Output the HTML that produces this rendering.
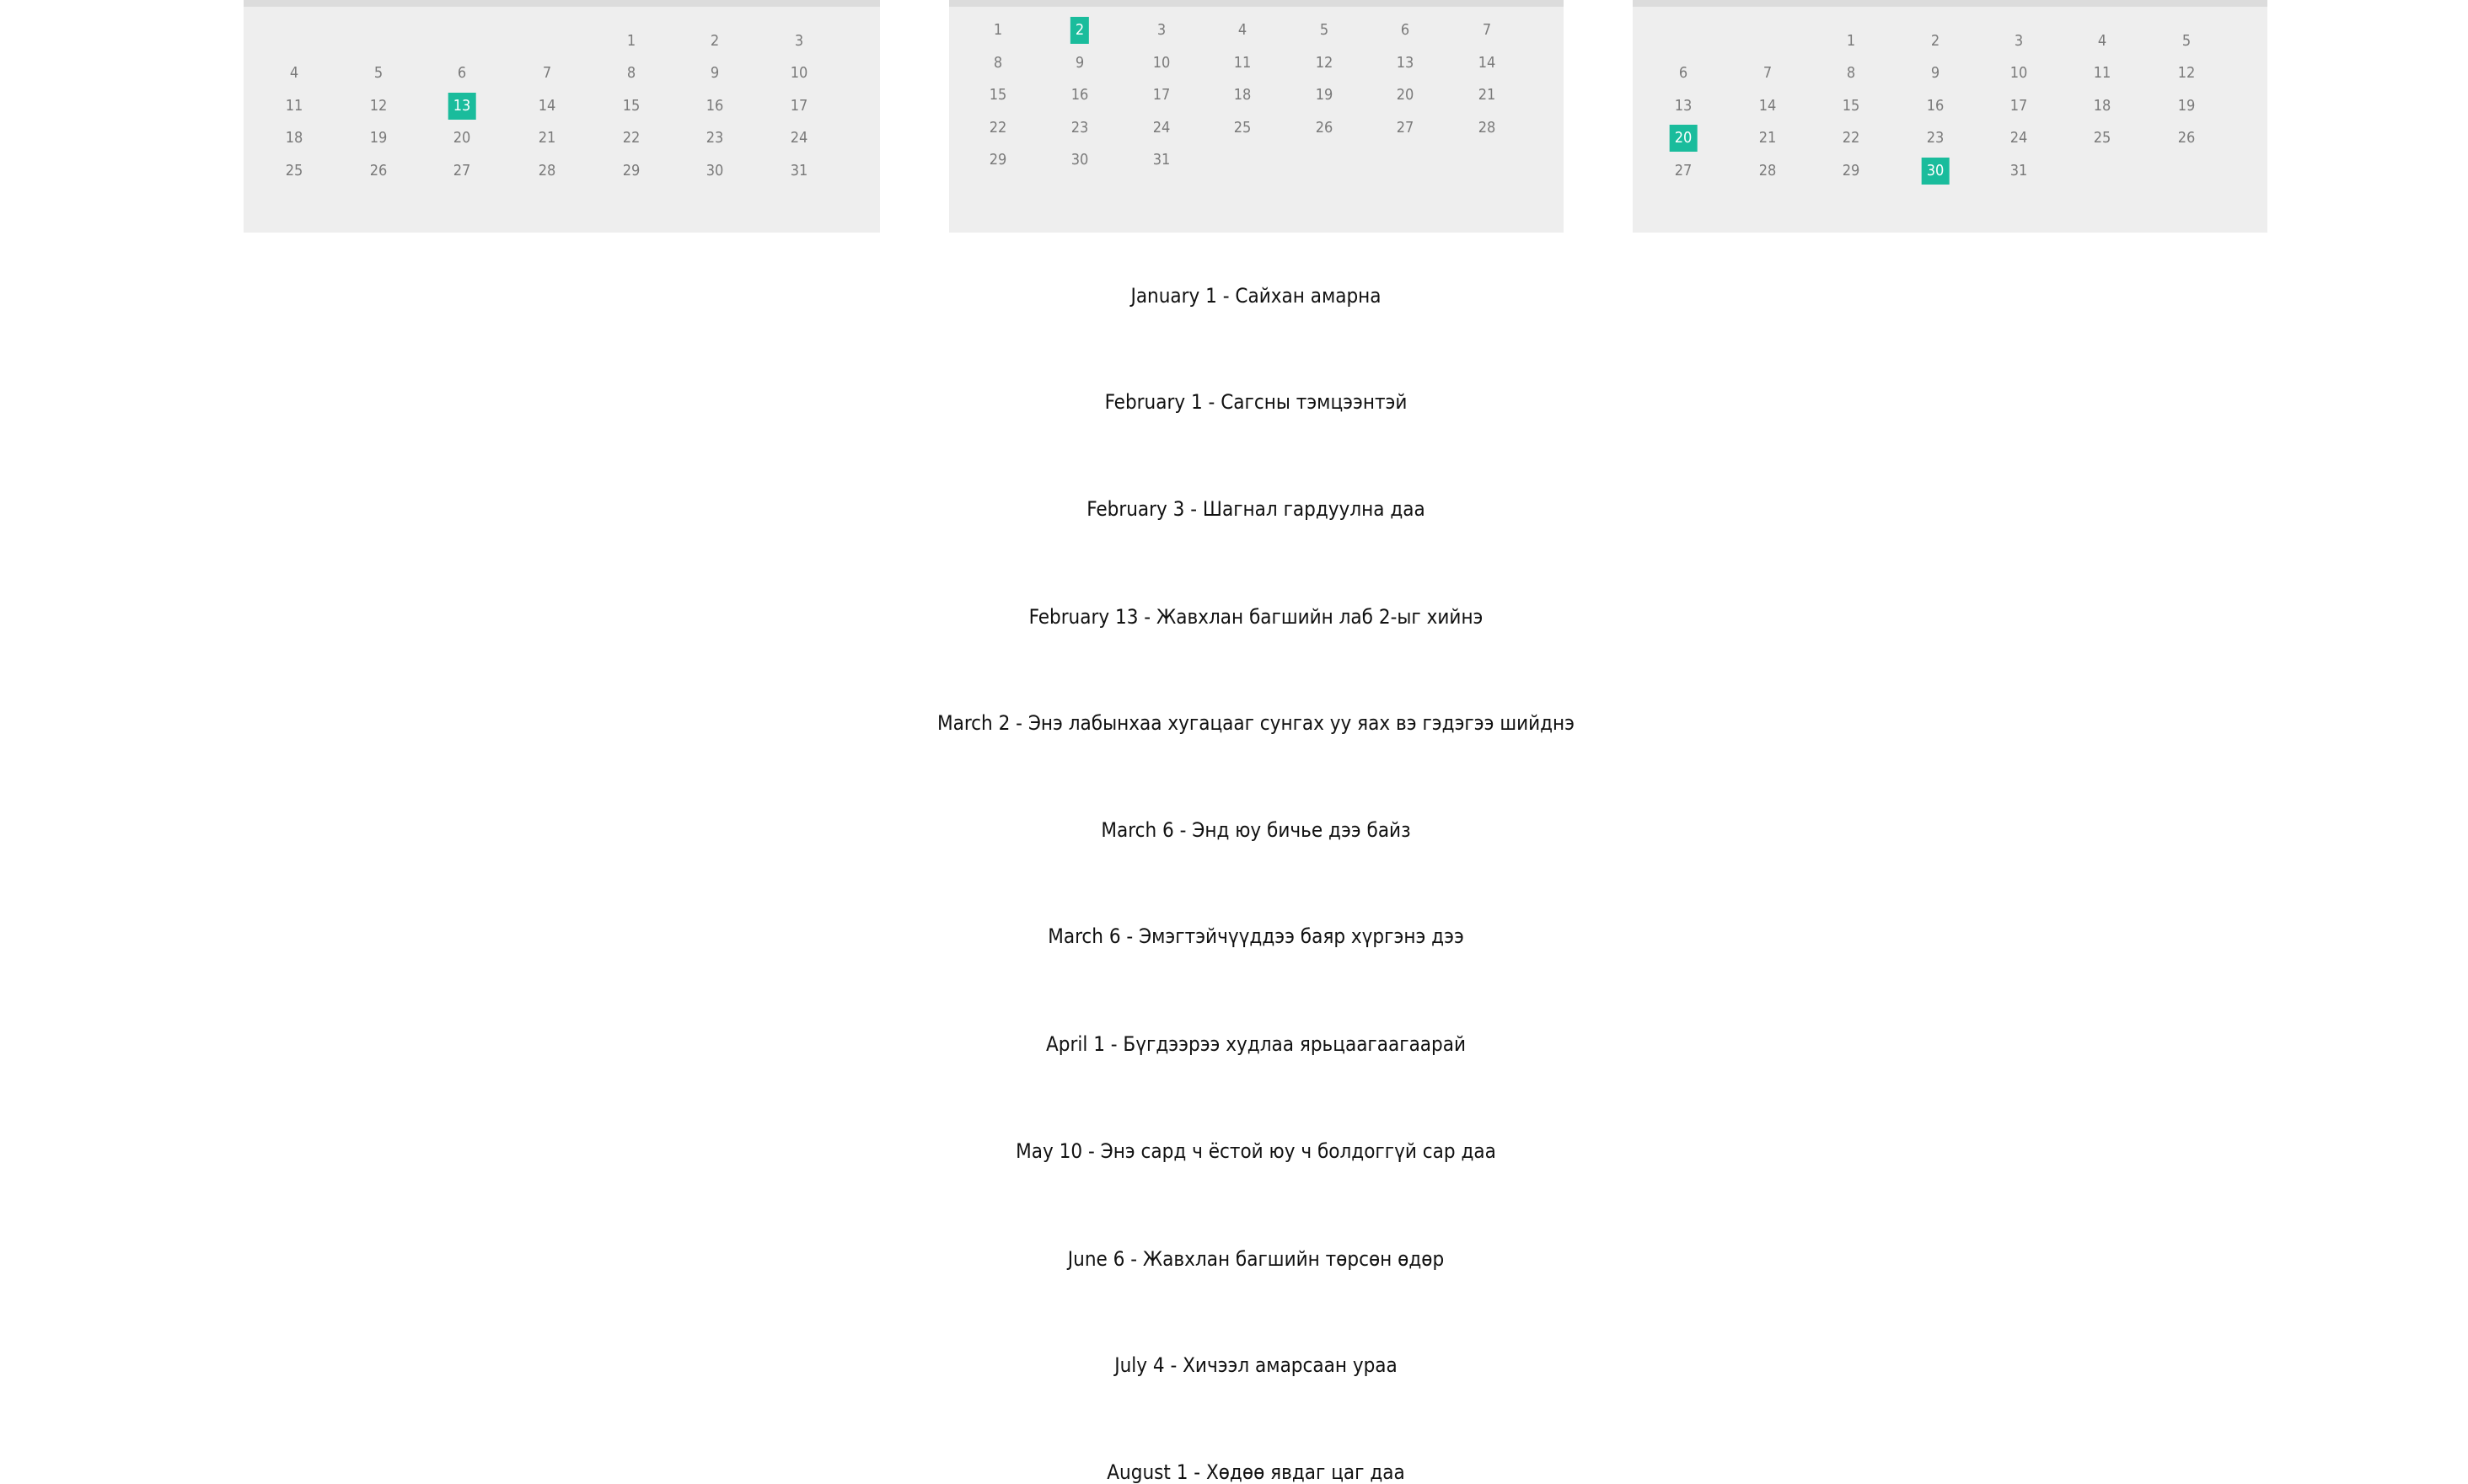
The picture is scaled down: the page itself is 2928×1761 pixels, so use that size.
<!DOCTYPE html>
<html><head><meta charset="utf-8"><style>
*{margin:0;padding:0;box-sizing:border-box}
html,body{width:2928px;height:1746px;overflow:hidden;background:#fff;font-family:"DejaVu Sans Condensed","Liberation Sans",sans-serif}
.cal{position:absolute;top:0;height:276px;background:#eeeeee;border-top:8px solid #dcdcdc}
.d{position:absolute;font-size:18px;color:#7a7a7a;transform:translate(-50%,-50%);line-height:32px;height:32px;padding:0 6px;white-space:nowrap}
.d.h{background:#1abc9c;color:#fff}
.ev{position:absolute;left:0;width:2980px;text-align:center;font-size:24px;color:#111;transform:translateY(-50%);font-family:"DejaVu Sans Condensed","Liberation Sans",sans-serif}
</style></head><body>
<div class="cal" style="left:289px;width:755px"></div>
<div class="cal" style="left:1126px;width:729px"></div>
<div class="cal" style="left:1937px;width:753px"></div>
<div id="c"></div>
<div class="ev" style="top:351px">January 1 - Сайхан амарна</div>
<div class="ev" style="top:477px">February 1 - Сагсны тэмцээнтэй</div>
<div class="ev" style="top:604px">February 3 - Шагнал гардуулна даа</div>
<div class="ev" style="top:732px">February 13 - Жавхлан багшийн лаб 2-ыг хийнэ</div>
<div class="ev" style="top:858px">March 2 - Энэ лабынхаа хугацааг сунгах уу яах вэ гэдэгээ шийднэ</div>
<div class="ev" style="top:985px">March 6 - Энд юу бичье дээ байз</div>
<div class="ev" style="top:1111px">March 6 - Эмэгтэйчүүддээ баяр хүргэнэ дээ</div>
<div class="ev" style="top:1239px">April 1 - Бүгдээрээ худлаа ярьцаагаагаарай</div>
<div class="ev" style="top:1366px">May 10 - Энэ сард ч ёстой юу ч болдоггүй сар даа</div>
<div class="ev" style="top:1494px">June 6 - Жавхлан багшийн төрсөн өдөр</div>
<div class="ev" style="top:1620px">July 4 - Хичээл амарсаан ураа</div>
<div class="ev" style="top:1747px">August 1 - Хөдөө явдаг цаг даа</div>
<script>
var c=document.getElementById('c'),h='';
function cal(cols,rows,start,days,hl){
 for(var d=1;d<=days;d++){var i=start+d-1,r=Math.floor(i/7),k=i%7;
  h+='<div class="d'+(hl.indexOf(d)>=0?' h':'')+'" style="left:'+cols[k]+'px;top:'+rows[r]+'px">'+d+'</div>';}
}
var r1=[49,87,126,164,203];
cal([349,449,548,649,749,848,948],r1,4,31,[13]);
cal([1184,1281,1378,1474,1571,1667,1764],[36,75,113,152,190],0,31,[2]);
cal([1997,2097,2196,2296,2395,2494,2594],r1,2,31,[20,30]);
c.innerHTML=h;
</script>
</body></html>
